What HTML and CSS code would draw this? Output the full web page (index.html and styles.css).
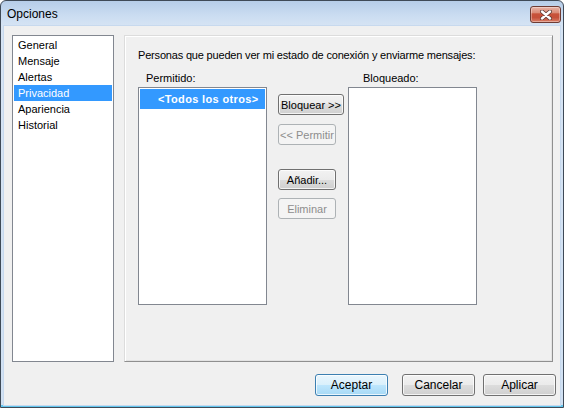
FILE: index.html
```html
<!DOCTYPE html>
<html lang="es">
<head>
<meta charset="utf-8">
<title>Opciones</title>
<link rel="stylesheet" href="styles.css">
</head>
<body>
<div class="win">
  <div class="titlebar">
    <span class="title">Opciones</span>
    <div class="close">
      <svg width="12" height="10" viewBox="0 0 12 10">
        <path d="M2 1.5 L10 8.5 M10 1.5 L2 8.5" stroke="#5a3a35" stroke-width="4" stroke-linecap="round"/>
        <path d="M2 1.5 L10 8.5 M10 1.5 L2 8.5" stroke="#ffffff" stroke-width="2.4" stroke-linecap="round"/>
      </svg>
    </div>
  </div>
  <div class="client">
    <div class="main">
      <div class="nav">
        <div class="nav-item">General</div>
        <div class="nav-item">Mensaje</div>
        <div class="nav-item">Alertas</div>
        <div class="nav-item sel">Privacidad</div>
        <div class="nav-item">Apariencia</div>
        <div class="nav-item">Historial</div>
      </div>
      <div class="panel">
        <p class="desc">Personas que pueden ver mi estado de conexión y enviarme mensajes:</p>
        <div class="labels">
          <div class="lbl lbl-a">Permitido:</div>
          <div class="lbl lbl-b">Bloqueado:</div>
        </div>
        <div class="lists">
          <div class="listbox">
            <div class="item sel">&lt;Todos los otros&gt;</div>
          </div>
          <div class="actions">
            <button class="btn wide">Bloquear &gt;&gt;</button>
            <button class="btn dis">&lt;&lt; Permitir</button>
            <button class="btn add">Añadir...</button>
            <button class="btn dis">Eliminar</button>
          </div>
          <div class="listbox"></div>
        </div>
      </div>
    </div>
    <div class="footer">
      <button class="btn big def">Aceptar</button>
      <button class="btn big cancel">Cancelar</button>
      <button class="btn big apply">Aplicar</button>
    </div>
  </div>
</div>
</body>
</html>
```

FILE: styles.css
```css
html, body {
  margin: 0;
  padding: 0;
  background: #ffffff;
}
body {
  font-family: "Liberation Sans", Arial, sans-serif;
  font-size: 11px;
  color: #000;
}
.win {
  width: 564px;
  height: 408px;
  box-sizing: border-box;
  border: 1px solid #3f4a57;
  border-radius: 6px 6px 0 0;
  background: linear-gradient(to bottom, #b6cde8 0px, #cadcf1 14px, #d6e4f4 25px, #d3e2f3 60%, #d1e1f3 calc(100% - 2px), #62c6ee calc(100% - 2px));
  display: flex;
  flex-direction: column;
  overflow: hidden;
}
.titlebar {
  height: 25px;
  flex: none;
  display: flex;
  align-items: center;
  justify-content: space-between;
  padding-left: 6px;
}
.title {
  font-size: 12px;
  color: #000;
  margin-top: 1px;
}
.close {
  width: 29px;
  height: 15px;
  margin-right: 2px;
  margin-top: 2px;
  border: 1px solid #6e3b33;
  border-radius: 3px;
  background: linear-gradient(to bottom, #e8b3a6 0%, #d98a76 40%, #c8523a 45%, #c5503a 70%, #d98068 100%);
  box-shadow: inset 0 0 0 1px rgba(255, 255, 255, 0.35);
  display: flex;
  align-items: center;
  justify-content: center;
}
.close svg { display: block; }
.client {
  flex: 1;
  margin: 0 3px 2px 3px;
  background: #f0f0f0;
  display: flex;
  flex-direction: column;
  box-shadow: 0 0 0 1px #c7d9ee;
}
.main {
  display: flex;
  padding: 9px 7px 0 8px;
}
.nav {
  width: 102px;
  height: 327px;
  box-sizing: border-box;
  border: 1px solid #828790;
  background: #fff;
  padding: 1px;
}
.nav-item {
  height: 16px;
  line-height: 16px;
  padding-left: 4px;
  white-space: nowrap;
}
.nav-item.sel {
  background: #3399ff;
  color: #fff;
}
.panel {
  margin-left: 10px;
  flex: 1;
  height: 327px;
  box-sizing: border-box;
  border-style: solid;
  border-width: 1px;
  border-color: #dcdcdc #8f8f8f #8f8f8f #dcdcdc;
  box-shadow: inset 1px 1px 0 #ffffff, inset -1px -1px 0 #e3e3e3;
  padding: 12px 0 0 13px;
}
.desc {
  margin: 0;
  line-height: 14px;
  white-space: nowrap;
  letter-spacing: -0.18px;
}
.labels {
  display: flex;
  margin-top: 9px;
  height: 14px;
  line-height: 14px;
}
.lbl-a { margin-left: 8px; width: 202px; }
.lbl-b { margin-left: 15px; }
.lists {
  display: flex;
  margin-top: 2px;
}
.listbox {
  width: 129px;
  height: 218px;
  box-sizing: border-box;
  border: 1px solid #828790;
  background: #fff;
  padding: 1px;
}
.item {
  height: 20px;
  line-height: 20px;
  padding-left: 18px;
  font-weight: bold;
  white-space: nowrap;
  letter-spacing: 0.35px;
}
.item.sel {
  background: #3399ff;
  color: #fff;
}
.actions {
  width: 66px;
  margin: 7px 4px 0 11px;
  display: flex;
  flex-direction: column;
  align-items: flex-start;
}
.btn {
  font-family: "Liberation Sans", Arial, sans-serif;
  font-size: 11px;
  color: #000;
  height: 21px;
  width: 58px;
  padding: 0;
  box-sizing: border-box;
  border: 1px solid #707070;
  border-radius: 3px;
  background: linear-gradient(to bottom, #f2f2f2 0%, #ebebeb 50%, #dddddd 50%, #cfcfcf 100%);
  box-shadow: inset 0 0 0 1px rgba(255, 255, 255, 0.75);
  white-space: nowrap;
}
.btn.wide { width: 66px; }
.btn.dis {
  color: #8d8d8d;
  border-color: #adb2b5;
  background: #f4f4f4;
  box-shadow: none;
}
.actions .btn + .btn { margin-top: 9px; }
.actions .btn.add { margin-top: 24px; }
.actions .btn.add + .btn { margin-top: 8px; }
.footer {
  display: flex;
  justify-content: flex-end;
  padding: 12px 4px 0 0;
}
.btn.big {
  width: 73px;
  height: 22px;
  font-size: 12px;
}
.btn.def {
  border-color: #3c7fb1;
  background: linear-gradient(to bottom, #eaf6fd 0%, #d9f0fc 50%, #bee6fd 50%, #a7d9f5 100%);
}
.btn.cancel { margin-left: 14px; }
.btn.apply { margin-left: 8px; }
```
